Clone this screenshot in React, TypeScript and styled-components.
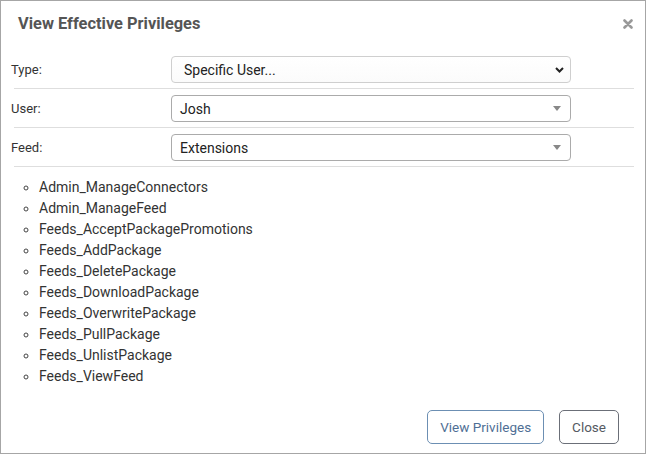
import React from "react";
import styled, { createGlobalStyle } from "styled-components";

const Global = createGlobalStyle`
  html, body { margin: 0; padding: 0; background: #fff; }
  body { font-family: Roboto, "Liberation Sans", Arial, sans-serif; font-size: 13px; color: #333; }
  * { box-sizing: border-box; }
`;

const Dialog = styled.div`
  width: 646px;
  height: 454px;
  border: 1px solid #a6a6a6;
  background: #fff;
  display: flex;
  flex-direction: column;
`;

const Header = styled.div`
  height: 49px;
  display: flex;
  align-items: center;
  justify-content: space-between;
  padding: 0 11px 4px 17px;
`;

const Title = styled.h1`
  margin: 0;
  font-size: 16.4px;
  font-weight: 700;
  color: #555;
`;

const CloseX = styled.button`
  border: 0;
  background: none;
  padding: 0;
  width: 12px;
  height: 12px;
  display: flex;
  align-items: center;
  justify-content: center;
  cursor: pointer;
`;

const Row = styled.div`
  display: grid;
  grid-template-columns: 160px 400px;
  align-items: center;
  padding: 6px 0 5px 10px;
`;

const Label = styled.label`
  font-size: 13px;
  color: #333;
  margin-top: -1px;
`;

const Divider = styled.div`
  height: 1px;
  background: #dedede;
  margin: 0 11px 0 13px;
`;

const SelectBox = styled.div<{ $native?: boolean }>`
  height: 27px;
  border: 1px solid ${(p) => (p.$native ? "#cfcfcf" : "#ababab")};
  border-radius: 4px;
  background: ${(p) => (p.$native ? "linear-gradient(#ffffff, #fbfbfb)" : "#fff")};
  display: flex;
  align-items: center;
  justify-content: space-between;
  padding: 0 ${(p) => (p.$native ? "6px 0 12px" : "9px 0 8px")};
  font-size: 14px;
  color: #222;
`;

const List = styled.ul`
  margin: 10px 0 0;
  padding-left: 38px;
  list-style: circle;
`;

const Item = styled.li`
  line-height: 21px;
  font-size: 14px;
  color: #333;
  &::marker { color: #444; }
`;

const Footer = styled.div`
  margin-top: auto;
  display: flex;
  justify-content: flex-end;
  gap: 15px;
  padding: 0 26px 9px 0;
`;

const Button = styled.button<{ $primary?: boolean }>`
  height: 34px;
  padding: 0 12px;
  border-radius: 5px;
  background: #fff;
  border: 1px solid ${(p) => (p.$primary ? "#6c8fb3" : "#6b6f78")};
  color: ${(p) => (p.$primary ? "#4f6f95" : "#555a63")};
  font-family: Roboto, "Liberation Sans", Arial, sans-serif;
  font-size: 13.5px;
  cursor: pointer;
`;

const Chevron = () => (
  <svg width="9" height="6" viewBox="0 0 9 6">
    <path d="M1 1 L4.5 4.5 L8 1" stroke="#222" strokeWidth="2" fill="none" />
  </svg>
);

const Triangle = () => (
  <svg width="8" height="5" viewBox="0 0 8 5">
    <path d="M0 0 H8 L4 5 Z" fill="#888" />
  </svg>
);

const privileges = [
  "Admin_ManageConnectors",
  "Admin_ManageFeed",
  "Feeds_AcceptPackagePromotions",
  "Feeds_AddPackage",
  "Feeds_DeletePackage",
  "Feeds_DownloadPackage",
  "Feeds_OverwritePackage",
  "Feeds_PullPackage",
  "Feeds_UnlistPackage",
  "Feeds_ViewFeed",
];

export default function App() {
  return (
    <>
      <Global />
      <Dialog>
        <Header>
          <Title>View Effective Privileges</Title>
          <CloseX aria-label="Close">
            <svg width="10" height="10" viewBox="0 0 10 10">
              <path d="M1.5 1.5 L8.5 8.5 M8.5 1.5 L1.5 8.5" stroke="#999" strokeWidth="2.6" strokeLinecap="round" />
            </svg>
          </CloseX>
        </Header>
        <Row>
          <Label>Type:</Label>
          <SelectBox $native>
            <span>Specific User...</span>
            <Chevron />
          </SelectBox>
        </Row>
        <Divider />
        <Row>
          <Label>User:</Label>
          <SelectBox>
            <span>Josh</span>
            <Triangle />
          </SelectBox>
        </Row>
        <Divider />
        <Row>
          <Label>Feed:</Label>
          <SelectBox>
            <span>Extensions</span>
            <Triangle />
          </SelectBox>
        </Row>
        <Divider />
        <List>
          {privileges.map((p) => (
            <Item key={p}>{p}</Item>
          ))}
        </List>
        <Footer>
          <Button $primary>View Privileges</Button>
          <Button>Close</Button>
        </Footer>
      </Dialog>
    </>
  );
}
